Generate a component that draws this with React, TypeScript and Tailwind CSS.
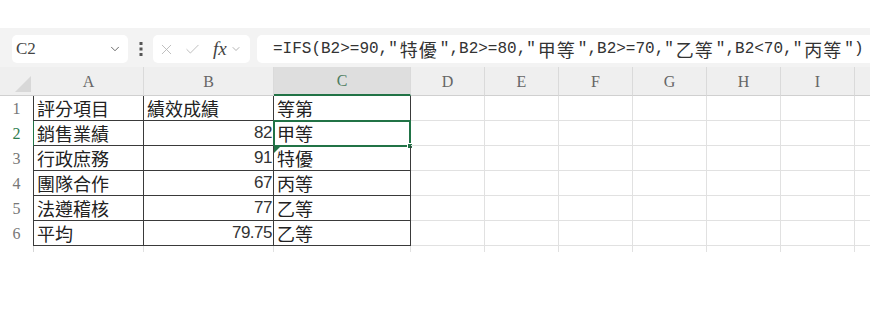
import React from "react";
import { Check, ChevronDown, X } from "lucide-react";

const colWidths = [
  "w-[110px]",
  "w-[130px]",
  "w-[137px]",
  "w-[74px]",
  "w-[74px]",
  "w-[74px]",
  "w-[74px]",
  "w-[74px]",
  "w-[74px]",
  "w-[74px]",
];
const letters = ["A", "B", "C", "D", "E", "F", "G", "H", "I", "J"];

const data = [
  ["評分項目", "績效成績", "等第"],
  ["銷售業績", "82", "甲等"],
  ["行政庶務", "91", "特優"],
  ["團隊合作", "67", "丙等"],
  ["法遵稽核", "77", "乙等"],
  ["平均", "79.75", "乙等"],
];

const cjk = "font-['Noto_Sans_CJK_TC',sans-serif]";
const head = "font-['Liberation_Serif','Noto_Sans_CJK_TC',serif]";

// CJK inside the mono formula gets a wider advance, like the real bar
const Cjk = ({ children }: { children: React.ReactNode }) => (
  <span className="px-[2px] font-['Noto_Sans_CJK_TC',sans-serif] text-[18px] tracking-[1px]">
    {children}
  </span>
);

const FormulaBar = () => {
  return (
    <div className="flex h-[39px] items-start bg-[#f3f3f3] pt-[7px] pl-[12px]">
      <div className="flex h-[28px] w-[116px] items-center justify-between rounded-[5px] bg-white pl-[4px] pr-[6px]">
        <span className={`${head} text-[17px] text-[#444]`}>C2</span>
        <ChevronDown size={14} strokeWidth={1.5} color="#555" />
      </div>
      <div className="flex h-[28px] w-[25px] items-center justify-center">
        <svg width="4" height="14" viewBox="0 0 4 14">
          <rect x="0.5" y="0" width="3" height="3" fill="#555" />
          <rect x="0.5" y="5.5" width="3" height="3" fill="#555" />
          <rect x="0.5" y="11" width="3" height="3" fill="#555" />
        </svg>
      </div>
      <div className="flex h-[28px] w-[97px] items-center rounded-[5px] bg-white pl-[5px]">
        <X size={17} strokeWidth={1.2} color="#b4b4b4" />
        <Check size={17} strokeWidth={1.2} color="#b4b4b4" className="ml-[9px]" />
        <span className="ml-[12px] font-['Liberation_Serif',serif] text-[19px] italic text-[#444]">
          fx
        </span>
        <ChevronDown size={12} strokeWidth={1.5} color="#999" className="ml-[3px]" />
      </div>
      <div className="ml-[7px] flex h-[28px] flex-1 items-center rounded-l-[5px] bg-white pl-[16px] whitespace-nowrap font-['Liberation_Mono','Noto_Sans_CJK_TC',monospace] text-[16px] text-[#333]">
        =IFS(B2&gt;=90,"<Cjk>特優</Cjk>",B2&gt;=80,"<Cjk>甲等</Cjk>",B2&gt;=70,"<Cjk>乙等</Cjk>",B2&lt;70,"<Cjk>丙等</Cjk>")
      </div>
    </div>
  );
};

const HeaderRow = () => {
  return (
    <div className="flex h-[29px] bg-[#efefef]">
      <div className="relative w-[34px] shrink-0 border-b border-[#d0d0d0]">
        <svg width="16" height="16" className="absolute right-[3px] bottom-[3px]">
          <polygon points="16,0 16,16 0,16" fill="#d8d8d8" />
        </svg>
      </div>
      {letters.map((l, i) => (
        <div
          key={l}
          className={`${colWidths[i]} flex shrink-0 items-end justify-center pb-[1px] ${head} text-[16px] ${
            i === 2
              ? "border-b-2 border-b-[#217346] bg-[#dedede] text-[#4d7d60]"
              : "border-b border-b-[#d0d0d0] text-[#666]"
          } border-r border-r-[#dadada]`}
        >
          {l}
        </div>
      ))}
    </div>
  );
};

const Row = ({ n, values }: { n: number; values?: string[] }) => {
  const sel = n === 2;
  return (
    <div className="flex h-[25px]">
      <div
        className={`flex w-[34px] shrink-0 items-center justify-center ${head} text-[16px] ${
          sel ? "text-[#2e7d4f]" : "text-[#777]"
        } ${values ? (sel ? "border-r border-r-[#217346]" : "border-r border-r-[#3a3a3a]") : "border-r border-r-[#d6d6d6]"}`}
      >
        {n}
      </div>
      {letters.map((l, i) => {
        const inTable = values && i < 3;
        const v = inTable ? values![i] : "";
        const numeric = i === 1 && n > 1;
        return (
          <div
            key={l}
            className={`${colWidths[i]} relative flex shrink-0 items-center ${
              inTable ? "border-r border-b border-[#3a3a3a]" : "border-r border-b border-[#e1e1e1]"
            } ${
              numeric
                ? "justify-end pr-[1px] font-['Liberation_Sans_Narrow','Liberation_Sans',sans-serif] text-[17px] tracking-[-0.5px] text-[#333]"
                : `pl-[3px] ${cjk} text-[18px] text-[#222]`
            }`}
          >
            {v}
            {sel && i === 2 && (
              <div className="absolute -top-[1px] -left-[1px] h-[27px] w-[138px] border-2 border-[#217346]">
                <div className="absolute -right-[4px] -bottom-[4px] h-[6px] w-[6px] border border-white bg-[#217346]" />
              </div>
            )}
            {n === 3 && i === 2 && (
              <svg width="7" height="7" className="absolute top-0 left-0">
                <polygon points="0,0 7,0 0,7" fill="#217346" />
              </svg>
            )}
          </div>
        );
      })}
    </div>
  );
};

export default function App() {
  return (
    <div className="h-[312px] w-[870px] overflow-hidden bg-white pt-[28px]">
      <FormulaBar />
      <div className="h-[185px] overflow-hidden">
        <HeaderRow />
        {data.map((r, i) => (
          <Row key={i} n={i + 1} values={r} />
        ))}
        <Row n={7} />
      </div>
    </div>
  );
}
